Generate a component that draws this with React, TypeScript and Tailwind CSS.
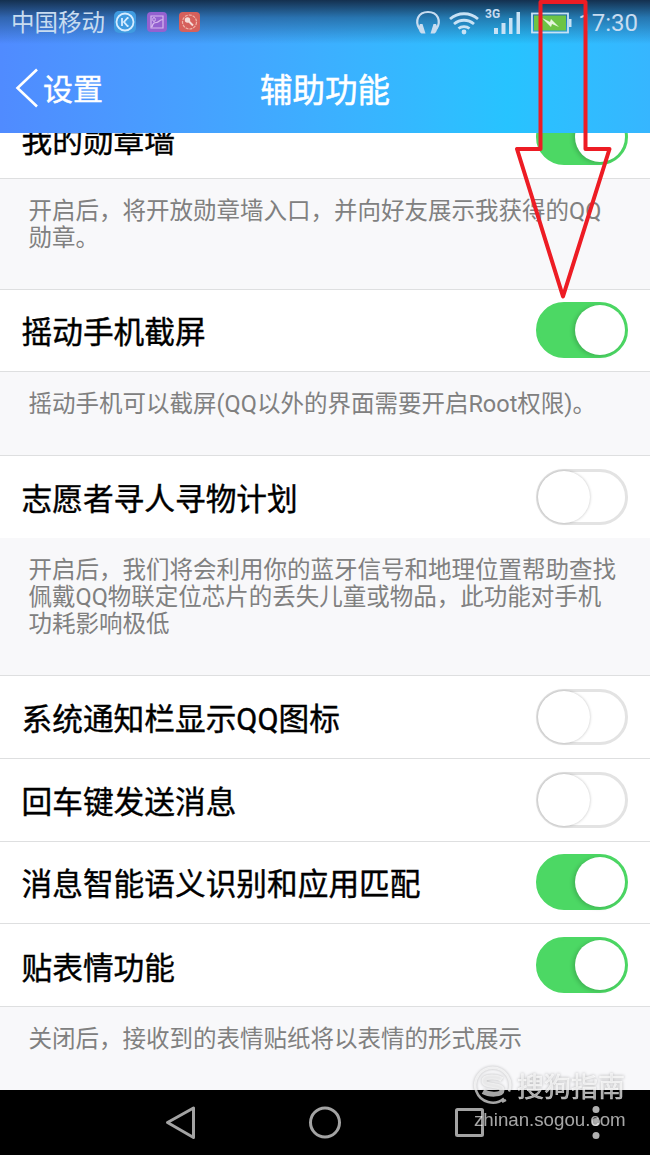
interface ToggleProps {
  on?: boolean
}

function Toggle({ on = false }: ToggleProps) {
  return (
    <div
      className={`-mt-px flex h-14 w-[92px] shrink-0 items-center rounded-full border-[3px] ${
        on ? 'justify-end border-[#4cd864] bg-[#4cd864]' : 'justify-start border-[#e3e3e3] bg-white'
      }`}
    >
      <div
        className={`rounded-full bg-white ${
          on
            ? 'h-[50px] w-[50px] shadow-[-2px_1px_4px_rgba(0,0,0,0.18)]'
            : '-ml-px h-[52px] w-[52px] shrink-0 shadow-[0_0_3px_rgba(0,0,0,0.25)]'
        }`}
      />
    </div>
  )
}

interface RowProps {
  title: string
  on?: boolean
  className?: string
}

function Row({ title, on, className = 'h-[83px] border-b border-[#dedfe0]' }: RowProps) {
  return (
    <div className={`flex shrink-0 items-center justify-between bg-white pl-[21.5px] pr-[22px] ${className}`}>
      <span className="mt-[5px] whitespace-nowrap text-[30.7px] leading-10 text-black [-webkit-text-stroke:0.4px_black]">
        {title}
      </span>
      <Toggle on={on} />
    </div>
  )
}

function Note({ lines, className }: { lines: string[]; className: string }) {
  return (
    <div className={`shrink-0 pl-[28.5px] pt-[19px] text-[23.5px] leading-[27px] text-[#808080] ${className}`}>
      {lines.map((line) => (
        <p key={line} className="whitespace-nowrap">
          {line}
        </p>
      ))}
    </div>
  )
}

function StatusBar() {
  return (
    <div className="flex h-11 items-center justify-between bg-linear-to-b from-[#14304f] via-[#1c4c7c]/60 via-40% to-transparent pl-[11px] pr-3 text-[#c8dcf0]">
      <div className="flex items-center">
        <span className="mt-0.5 text-[23.5px] leading-8">中国移动</span>
        <svg className="ml-[9px]" width="87" height="22" viewBox="0 0 87 22" fill="none">
          <rect x="0" y="0" width="22" height="22" rx="5" fill="#3f9be0" />
          <circle cx="11" cy="11" r="8.5" stroke="#d5ecff" strokeWidth="1.8" />
          <path d="M8 7v8M14.5 7h-1l-3.500 4 3.500 4h1" stroke="#d5ecff" strokeWidth="1.8" />
          <rect x="33" y="1" width="20" height="20" rx="4" fill="#9461d0" />
          <path d="M37 5h12v12H37zM38 16c1-4 2-4.500 4.500-4.500S45 8.500 49 8.500" stroke="#d6b8ee" strokeWidth="1.2" />
          <ellipse cx="40" cy="8.500" rx="1.300" ry="2" stroke="#d6b8ee" />
          <rect x="65" y="1" width="21" height="20" rx="4" fill="#d6605c" />
          <circle cx="75.500" cy="11" r="7" stroke="#f0b5a9" strokeWidth="1.200" strokeDasharray="3 1" />
          <path d="M74 9.500l5 5" stroke="#f5dcd8" strokeWidth="2" />
          <circle cx="73.500" cy="9" r="2.700" fill="#f5dcd8" />
        </svg>
      </div>
      <div className="flex items-center">
        <svg width="158" height="32" viewBox="412 5 158 32" fill="none" overflow="visible">
          <path d="M419.500 28C414.500 20 418 11 428 11s13.500 9 8.500 17" stroke="#c8dcf0" strokeWidth="2.200" />
          <path d="M420 23l2.500 0 3 9.500-4 0c-3-2-3.500-6-1.500-9.500zM436 23l-2.500 0-3 9.500 4 0c3-2 3.500-6 1.500-9.500z" fill="#c8dcf0" />
          <g stroke="#c8e2f5" strokeWidth="2.800">
            <path d="M450 18c8-7 20-7 28 0" />
            <path d="M454 23c6-5 14-5 20 0" />
            <path d="M458.500 27.500c3-2.500 8-2.500 11 0" />
          </g>
          <circle cx="464" cy="31" r="2.400" fill="#c8e2f5" />
          <text x="485" y="16.500" fontSize="12" fontWeight="700" fill="#c8dcf0">
            3G
          </text>
          <path d="M494 27h4v6h-4zM501.500 22h4v11h-4zM509 17h3.500v16H509zM516.500 11h3.500v22h-3.500z" fill="#c8e2f5" />
          <rect x="532" y="12.500" width="36" height="19" stroke="#c8e2f5" strokeWidth="1.800" />
          <rect x="534" y="14.500" width="32" height="15" fill="#6dc445" />
          <path d="M569 18h2.500v8H569z" fill="#c8e2f5" />
          <path d="M542 17l8 4 1-3 8 8-7-3-1 3z" fill="#e5f5dc" />
        </svg>
        <span className="ml-2 mt-0.5 text-[24px] leading-8">17:30</span>
      </div>
    </div>
  )
}

function Header() {
  return (
    <header className="h-[133px] shrink-0 bg-linear-to-r from-[#508bff] via-[#27c3ff] via-78% to-[#36b6ff]">
      <StatusBar />
      <div className="grid h-[89px] grid-cols-3 items-center text-white">
        <div className="flex items-center pl-[15px]">
          <svg className="-mt-px" width="23" height="40" viewBox="0 0 23 40" fill="none" stroke="#fff" strokeWidth="2.600">
            <path d="M22 1.500L2.500 20l19.500 18.500" />
          </svg>
          <span className="ml-[5px] mt-[3px] text-[30px] leading-10 [-webkit-text-stroke:0.4px_white]">设置</span>
        </div>
        <h1 className="mt-1 text-center text-[32.500px] leading-10 [-webkit-text-stroke:0.5px_white]">辅助功能</h1>
      </div>
    </header>
  )
}

function NavBar() {
  return (
    <footer className="h-[65px] shrink-0 bg-black">
      <svg width="650" height="65" viewBox="0 0 650 65" fill="none" stroke="#a3a3a3" strokeWidth="3">
        <path d="M167.500 32.500L193.500 18v29.500z" strokeLinejoin="round" />
        <circle cx="325" cy="32.500" r="14.500" />
        <rect x="456.500" y="19.500" width="26" height="26" rx="1" />
        <g fill="#b0b0b0" stroke="none">
          <circle cx="596" cy="19.500" r="3.500" />
          <circle cx="596" cy="32" r="4" />
          <circle cx="596" cy="45.500" r="3.500" />
        </g>
      </svg>
    </footer>
  )
}

function Watermark() {
  return (
    <div className="pointer-events-none absolute left-[473px] top-[1066px] text-white/65 drop-shadow-[0_0_1.5px_rgba(0,0,0,0.4)]">
      <div className="flex h-10 items-center">
        <svg width="40" height="40" viewBox="0 0 40 40" fill="none" stroke="currentColor">
          <path d="M31 32.500a17.500 17.500 0 1 1 5-7M29 36l4-2" strokeWidth="2.500" />
          <path d="M29 13.500c-5-3.500-18-3.500-18 1.500 0 6 18 3 18 9 0 5.500-13 5-19 1.500" strokeWidth="5" />
        </svg>
        <span className="ml-[4px] mt-1 text-[27px] leading-10 [-webkit-text-stroke:0.5px]">搜狗指南</span>
      </div>
      <p className="ml-px text-[18.700px] leading-7 font-['Liberation_Sans']">zhinan.sogou.com</p>
    </div>
  )
}

function Arrow() {
  return (
    <svg
      className="pointer-events-none absolute left-[510px] top-0"
      width="106"
      height="304"
      viewBox="510 0 106 304"
      fill="none"
      stroke="#ed1c24"
      strokeWidth="4"
      strokeLinejoin="round"
    >
      <path d="M540.500 2h45v147h24L563 296.500 517 149h23.500z" />
    </svg>
  )
}

export default function App() {
  return (
    <div className="relative flex h-[1155px] w-[650px] flex-col overflow-hidden bg-[#f8f8fa] font-['Roboto','Noto_Sans_CJK_SC',sans-serif]">
      <Header />
      <main className="flex h-[957px] shrink-0 flex-col overflow-hidden">
        <Row title="我的勋章墙" on className="-mt-[36px] h-[82px] border-b border-[#dedfe0] [&>span]:mt-[9px]" />
        <Note
          lines={['开启后，将开放勋章墙入口，并向好友展示我获得的QQ', '勋章。']}
          className="h-[111px] border-b border-[#dedfe0]"
        />
        <Row title="摇动手机截屏" on className="h-[82px] border-b border-[#dedfe0]" />
        <Note
          lines={['摇动手机可以截屏(QQ以外的界面需要开启Root权限)。']}
          className="h-[84px] border-b border-[#dedfe0]"
        />
        <Row title="志愿者寻人寻物计划" className="h-[82px]" />
        <Note
          lines={[
            '开启后，我们将会利用你的蓝牙信号和地理位置帮助查找',
            '佩戴QQ物联定位芯片的丢失儿童或物品，此功能对手机',
            '功耗影响极低',
          ]}
          className="h-[138px] border-b border-[#dedfe0]"
        />
        <Row title="系统通知栏显示QQ图标" />
        <Row title="回车键发送消息" />
        <Row title="消息智能语义识别和应用匹配" on className="h-[82px] border-b border-[#dedfe0]" />
        <Row title="贴表情功能" on className="h-[83px] border-b border-[#dedfe0] pt-px [&>span]:mt-[6px]" />
        <Note lines={['关闭后，接收到的表情贴纸将以表情的形式展示']} className="h-[83px]" />
      </main>
      <NavBar />
      <Watermark />
      <Arrow />
    </div>
  )
}
